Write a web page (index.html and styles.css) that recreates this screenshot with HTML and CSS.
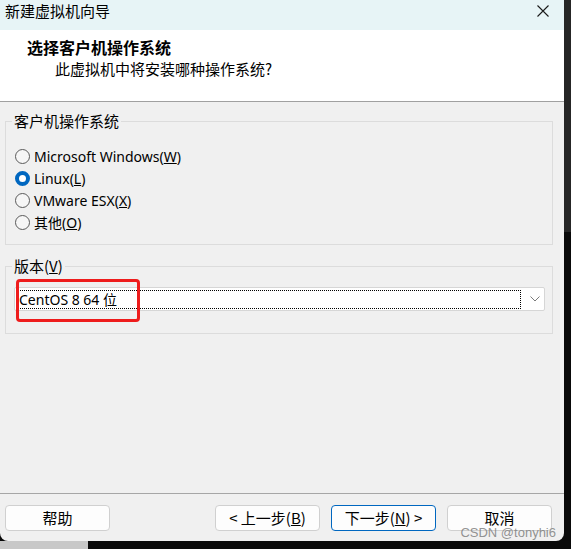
FILE: index.html
```html
<!DOCTYPE html>
<html lang="zh-CN">
<head>
<meta charset="utf-8">
<title>新建虚拟机向导</title>
<link rel="stylesheet" href="styles.css">
</head>
<body>
<div class="window">
  <div class="titlebar">
    <span class="title">新建虚拟机向导</span>
    <svg class="close" width="12" height="12" viewBox="0 0 12 12"><path d="M0.5 0.5 L11.5 11.5 M11.5 0.5 L0.5 11.5" stroke="#1a1a1a" stroke-width="1.1" fill="none"/></svg>
  </div>
  <div class="header">
    <div class="h-title">选择客户机操作系统</div>
    <div class="h-sub">此虚拟机中将安装哪种操作系统?</div>
  </div>
  <div class="content">
    <fieldset class="group group-os">
      <legend>客户机操作系统</legend>
      <div class="radios">
        <div class="radio"><span class="dot"></span><span>Microsoft Windows(<u>W</u>)</span></div>
        <div class="radio"><span class="dot on"></span><span>Linux(<u>L</u>)</span></div>
        <div class="radio"><span class="dot"></span><span>VMware ESX(<u>X</u>)</span></div>
        <div class="radio"><span class="dot"></span><span>其他(<u>O</u>)</span></div>
      </div>
    </fieldset>
    <fieldset class="group group-ver">
      <legend>版本(<u>V</u>)</legend>
      <div class="select">
        <div class="focus">CentOS 8 64 位</div>
        <svg class="chev" width="10" height="6" viewBox="0 0 10 6"><path d="M0.5 0.5 L5 5 L9.5 0.5" stroke="#7a7a7a" stroke-width="1" fill="none"/></svg>
      </div>
      <div class="mark"></div>
    </fieldset>
  </div>
  <div class="footer">
    <button class="btn">帮助</button>
    <div class="spacer"></div>
    <button class="btn">&lt; 上一步(<u>B</u>)</button>
    <button class="btn primary">下一步(<u>N</u>) &gt;</button>
    <button class="btn">取消</button>
    <span class="watermark">CSDN @tonyhi6</span>
  </div>
</div>
</body>
</html>
```
FILE: styles.css
```css
* { box-sizing: border-box; }
html, body { margin: 0; padding: 0; }
body {
  width: 571px;
  height: 549px;
  overflow: hidden;
  font-family: "Noto Sans", "Noto Sans CJK SC", sans-serif;
  font-size: 14px;
  color: #000;
  background:
    linear-gradient(#c8c8c8, #c8c8c8) 0 100% / 88px 8px no-repeat,
    linear-gradient(#262626, #262626) 100% 0 / 7px 232px no-repeat,
    #0a0a0a;
}
.window {
  width: 564px;
  height: 541px;
  background: #f0f0f0;
  border-radius: 0 0 8px 8px;
  overflow: hidden;
  display: flex;
  flex-direction: column;
}
.titlebar {
  height: 30px;
  background: #e7f4f6;
  display: flex;
  align-items: center;
  justify-content: space-between;
  padding: 0 15px 10px 5px;
  font-family: "Noto Sans CJK SC", sans-serif;
  font-size: 15px;
}
.close { margin-top: 2px; }
.header {
  height: 72px;
  background: #fff;
  border-bottom: 1px solid #a0a0a0;
  padding-top: 7px;
}
.h-title {
  padding-left: 27px;
  font-family: "Noto Sans CJK SC", sans-serif;
  font-weight: bold;
  font-size: 16px;
  line-height: 20px;
}
.h-sub {
  padding-left: 55px;
  margin-top: 2px;
  font-family: "Noto Sans CJK SC", sans-serif;
  font-size: 15px;
  line-height: 20px;
}
.content {
  flex: 1;
  padding: 10px 11px 0 5px;
  display: flex;
  flex-direction: column;
}
.group {
  margin: 0;
  border: 1px solid #dcdcdc;
  padding: 0;
}
.group legend {
  margin-left: 6px;
  padding: 0 2px;
  font-family: "Noto Sans CJK SC", sans-serif;
  font-size: 15px;
  line-height: 18px;
}
.group-os {
  height: 133px;
}
.radios {
  padding: 15px 0 0 9px;
}
.radio {
  display: flex;
  align-items: center;
  gap: 4px;
  height: 22px;
  font-size: 14px;
}
.dot {
  width: 15px;
  height: 15px;
  border-radius: 50%;
  border: 1px solid #5a5a5a;
  background: #f6f6f6;
  flex: none;
}
.dot.on {
  border: 4px solid #0067c0;
  background: #fff;
}
.group-ver {
  position: relative;
  margin-top: 12px;
  height: 77px;
}
.select {
  margin: 12px 7px 0 8px;
  height: 24px;
  background: #fff;
  border: 1px solid #d6d6d6;
  border-radius: 2px;
  display: flex;
  align-items: center;
  padding: 0 4px 0 2px;
  gap: 9px;
}
.focus {
  flex: 1;
  height: 19px;
  border: 1px dotted #000;
  padding-left: 1px;
  line-height: 17px;
  font-size: 14px;
  font-family: "Noto Sans", "Noto Sans CJK SC", sans-serif;
}
.chev { flex: none; }
.mark {
  position: absolute;
  left: 10px;
  top: 4px;
  width: 124px;
  height: 43px;
  border: 3px solid #ee1c1c;
  border-radius: 4px;
}
.footer {
  position: relative;
  height: 48px;
  border-top: 1px solid #a6a6a6;
  display: flex;
  align-items: flex-start;
  gap: 11px;
  padding: 11px 12px 0 5px;
}
.spacer { flex: 1; }
.btn {
  width: 105px;
  height: 26px;
  background: #fdfdfd;
  border: 1px solid #d0d0d0;
  border-radius: 4px;
  font-family: "Noto Sans CJK SC", sans-serif;
  font-size: 15px;
  line-height: 22px;
  color: #000;
  padding: 0;
}
.btn.primary { border-color: #0067c0; }
.watermark {
  position: absolute;
  right: 8px;
  bottom: 1px;
  font-family: "Liberation Sans", sans-serif;
  font-size: 13px;
  line-height: 14px;
  color: rgba(120,120,120,0.8);
}
```
